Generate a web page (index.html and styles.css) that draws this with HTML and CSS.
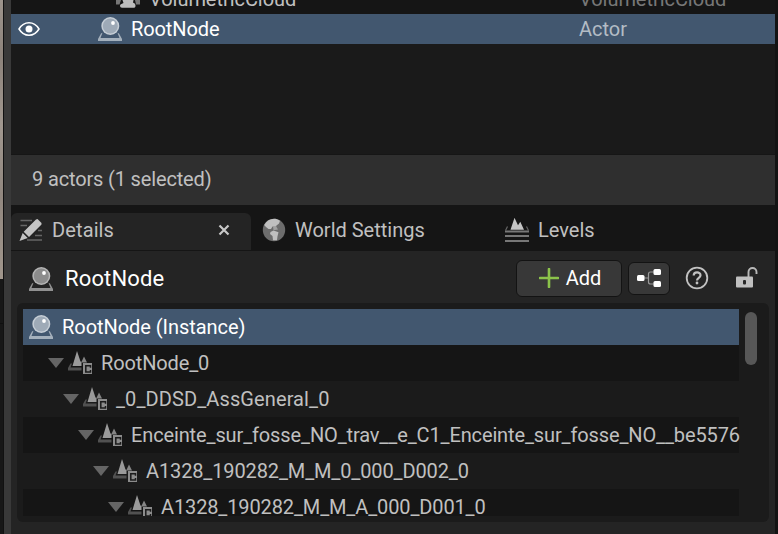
FILE: index.html
```html
<!DOCTYPE html>
<html lang="en">
<head>
<meta charset="utf-8">
<title>Details</title>
<link rel="stylesheet" href="styles.css">
</head>
<body>
<svg class="defs" width="0" height="0">
  <symbol id="actor" viewBox="0 0 24 24">
    <path d="M3 16.500 0 22v2h24v-2l-3-5.500-1.500-.8 2 5.300h-19l2-5.300z" opacity=".75"/>
    <circle cx="12.300" cy="9" r="9"/>
    <circle class="ball" cx="12.300" cy="9" r="7.500"/>
    <circle cx="15" cy="6" r="1.900" fill="#fff"/>
  </symbol>
  <symbol id="component" viewBox="0 0 24 24">
    <path d="M2.500 12.500 0 17V19.500h13.500V16.500H2.500l1.500-4z" fill="#515151"/>
    <path d="M9 0 4.500 15H13.500v-4l-1-.5z" fill="#9a9a9a"/>
    <path d="m16 5.500-2.800 6h5.800z" fill="#858585"/>
    <path d="M15 12h9v11h-9z" fill="#8c8c8c"/>
    <path d="M22.500 16.800v-2h-4.700v6.200h4.700v-2" fill="none" stroke="#1b1b1b" stroke-width="1.500"/>
    <path d="M20 13.500h4M20 22.500h4" fill="none" stroke="#8c8c8c" stroke-width=".8"/>
  </symbol>
</svg>
<div class="window">
  <div class="viewport"><div class="scene"></div><div class="below"></div></div>
  <div class="splitter"></div>
  <main class="dock">
    <section class="outliner">
      <div class="actor-row cut">
        <span class="eye"></span>
        <svg class="cloud" width="24" height="8" viewBox="0 0 24 8"><path d="M0 0h5L3.500 4.500H0zM19 0h5v4.500h-4z" fill="#777"/><path d="M6.500 0h11l-.5 2.500 2 1.200c1 1.800.5 4-1 4H6C3.500 7.700 3.500 4.200 5.500 4l2-1z" fill="#bdbdbd"/></svg>
        <span class="name">VolumetricCloud</span><span class="type">VolumetricCloud</span>
      </div>
      <div class="actor-row selected">
        <svg class="eye" width="22" height="16" viewBox="0 0 22 16"><path d="M1 8C6-.3 16-.3 21 8 16 16.300 6 16.300 1 8Z" fill="none" stroke="#fff" stroke-width="1.500"/><circle cx="11" cy="8" r="3.500" fill="#fff"/></svg>
        <svg class="ico blue"><use href="#actor"/></svg>
        <span class="name">RootNode</span><span class="type">Actor</span>
      </div>
    </section>
    <div class="status"><span>9 actors (1 selected)</span></div>
    <nav class="tabs">
      <div class="tab active">
        <svg width="24" height="24" viewBox="0 0 24 24"><path d="M1.500 2.500H13M1.500 7.500H8M19 12.500h4M16 17.500h7M8 22h15" stroke="#666" stroke-width="1.300"/><path d="m17 1.500 1.500-.5 4 4v1.500L10 19l-5.300-5.200zM3.700 15l5 5L.5 23z" fill="#c4c4c4"/></svg>
        <span class="label">Details</span>
        <svg class="close" width="12" height="12" viewBox="0 0 12 12"><path d="m1.500 1.500 9 9m0-9-9 9" stroke="#c8c8c8" stroke-width="2.200"/></svg>
      </div>
      <div class="tab world">
        <svg width="24" height="24" viewBox="0 0 24 24"><circle cx="12" cy="12" r="11.200" fill="#6d6d6d"/><path d="M2.200 7C5 2 10 0 15 1.200l3 1.500-1 2.800-2.500 2-1 1.500-3-.5-1.500 2.500H6.500L4 9zM8.500 14l3-1.500 5 1.800-1 4-.5 4h-4l-.5-4.300L8 16z" fill="#c0c0c0"/><path d="m11 8.500 3-.5 2 3.500-4.500.8z" fill="#a0a0a0"/></svg>
        <span class="label">World Settings</span>
      </div>
      <div class="tab">
        <svg width="24" height="24" viewBox="0 0 24 24"><path d="m5.500 11.800 4-12 3.500 7.500 2.300-3.500 3.700 8z" fill="#c4c4c4"/><path d="M2.500 8.500.5 12.500M21.500 8.500l2 4" stroke="#666" stroke-width="1.200"/><path d="M0 13.500h24M0 18h24M0 23h24" stroke="#777" stroke-width="2"/></svg>
        <span class="label">Levels</span>
      </div>
    </nav>
    <section class="details">
      <header class="toolbar">
        <svg class="ico grey"><use href="#actor"/></svg>
        <h1>RootNode</h1>
        <button class="add"><svg width="20" height="20" viewBox="0 0 20 20"><path d="M10 1v18M1 10h18" stroke="#8bc24a" stroke-width="2.600" stroke-linecap="round"/></svg><span>Add</span></button>
        <button class="graph"><svg width="24" height="18" viewBox="0 0 24 18"><path d="M7 9h4.500M17 3h-3.500q-2 0-2 2v8q0 2 2 2H17" fill="none" stroke="#999" stroke-width="1.200"/><g fill="#fff"><rect y="6" width="7.500" height="6" rx="1.500"/><rect x="16.500" width="7.500" height="6" rx="1.500"/><rect x="16.500" y="12" width="7.500" height="6" rx="1.500"/></g></svg></button>
        <svg class="help" width="24" height="24" viewBox="0 0 24 24" fill="none" stroke="#c2c2c2"><circle cx="12" cy="12" r="10.300" stroke-width="1.800"/><path d="M8.700 9.500c0-4.200 6.800-4.200 6.800-.3 0 2.600-3.500 2.600-3.500 5.300" stroke-width="2.200"/><circle cx="12" cy="17" r=".7" stroke-width="1.400"/></svg>
        <svg class="lock" width="22" height="22" viewBox="0 0 22 22"><path d="M12.500 11V6a4 4 0 0 1 8 0v2" fill="none" stroke="#b8b8b8" stroke-width="1.900"/><rect y="10.500" width="17" height="11" rx="1" fill="#c0c0c0"/><rect x="7" y="14" width="3" height="4.500" rx="1" fill="#282828"/></svg>
      </header>
      <div class="tree">
        <div class="rows">
          <div class="row root"><svg class="ico blue"><use href="#actor"/></svg><span>RootNode (Instance)</span></div>
          <div class="row odd d1"><i></i><svg class="ico"><use href="#component"/></svg><span>RootNode_0</span></div>
          <div class="row d2"><i></i><svg class="ico"><use href="#component"/></svg><span>_0_DDSD_AssGeneral_0</span></div>
          <div class="row odd d3"><i></i><svg class="ico"><use href="#component"/></svg><span>Enceinte_sur_fosse_NO_trav__e_C1_Enceinte_sur_fosse_NO__be5576</span></div>
          <div class="row d4"><i></i><svg class="ico"><use href="#component"/></svg><span>A1328_190282_M_M_0_000_D002_0</span></div>
          <div class="row odd d5"><i></i><svg class="ico"><use href="#component"/></svg><span>A1328_190282_M_M_A_000_D001_0</span></div>
        </div>
        <div class="thumb"></div>
      </div>
    </section>
  </main>
</div>
</body>
</html>
```
FILE: styles.css
```css
* { box-sizing: border-box; }
body { margin: 0; background: #131313; color: #c0c0c0; font: 20px/24px Roboto, "Liberation Sans", sans-serif; overflow: hidden; }
.defs { position: absolute; }
svg { flex: none; display: block; }
span { white-space: nowrap; }
.window { display: flex; width: 778px; height: 534px; }
.viewport { width: 4px; border-right: 1px solid #111; background: #171717; }
.scene { height: 279px; background: linear-gradient(#9d948c, #8d837b 20%, #a0978f 45%, #91877f 70%, #a0968c); }
.below { height: 45px; border-bottom: 1px solid #0f0f0f; }
.splitter { width: 7px; background: #393939; }
.dock { width: 764px; display: flex; flex-direction: column; }
.outliner { height: 155px; background: #1a1a1a; border-bottom: 1px solid #161616; }
.actor-row { display: flex; align-items: center; height: 30px; padding-left: 7px; letter-spacing: -0.1px; }
.actor-row.cut { height: 14px; background: #151515; align-items: flex-end; overflow: hidden; letter-spacing: -0.05px; }
.cut .name, .cut .type { margin-bottom: 3px; }
.cut .type { color: #777; }
.actor-row.cut .cloud { margin: 0 -12px 6px 76px; }
.actor-row .eye { width: 22px; }
.actor-row .ico { margin-left: 58px; }
.name { width: 448px; margin-left: 9px; }
.cut .name { margin-left: 21px; width: 430px; }
.selected { background: #42576f; color: #fff; }
.selected .type { color: #b3bcc5; letter-spacing: 0; }
.ico { width: 24px; height: 24px; }
.blue { fill: #c6ced6; color: #9eaab7; }
.grey { fill: #b5b5b5; color: #8c8c8c; }
.ball { fill: currentColor; }
.status { height: 50px; background: #2f2f2f; padding: 12px 21px; letter-spacing: -0.15px; }
.tabs { display: flex; height: 46px; padding-top: 8px; background: #151515; }
.tab { display: flex; align-items: center; width: 243px; height: 37px; padding: 0 11px 3px; }
.tab.active { width: 240px; padding: 0 21px 3px 8px; background: #242424; border-radius: 6px 6px 0 0; }
.tab svg { margin-right: 9px; }
.tab .close { margin: 0 0 0 auto; }
.active .label { letter-spacing: 0.12px; }
.details { height: 283px; background: #242424; padding: 0 6px; }
.toolbar { display: flex; align-items: center; height: 52px; padding: 3px 11px 0 12px; }
h1 { margin: 0 auto 0 12px; font-size: 22px; font-weight: 400; color: #fff; letter-spacing: 0.15px; }
button { display: flex; align-items: center; justify-content: center; background: #383838; border: 1px solid #131313; border-radius: 6px; color: #fff; font: inherit; padding: 0; }
.add { width: 106px; height: 37px; gap: 7px; padding-left: 2px; margin-bottom: 1px; }
.graph { width: 42px; height: 33px; margin: 0 15px 1px 6px; }
.help { margin: 0 27px 2px 0; }
.lock { margin-bottom: 4px; }
.tree { display: flex; height: 219px; padding: 6px; background: #1b1b1b; border-radius: 6px; }
.rows { width: 717px; margin-right: -1px; height: 207px; overflow: hidden; }
.row { display: flex; align-items: center; width: 716px; height: 36px; letter-spacing: -0.13px; }
.row.root { background: #42576f; color: #fff; padding-left: 6px; letter-spacing: -0.05px; }
.row span { margin-left: 9px; }
.odd { background: #151515; }
.row i { width: 16px; height: 10px; margin-right: 4px; background: #656565; clip-path: polygon(0 0, 100% 0, 50% 100%); flex: none; }
.d1 { padding-left: 25px; }
.d2 { padding-left: 40px; letter-spacing: 0.1px; }
.d3 { padding-left: 55px; }
.d4 { padding-left: 70px; }
.d5 { padding-left: 85px; }
.thumb { width: 12px; height: 53px; margin: 3px 0 0 6px; border-radius: 6px; background: #575757; }
```
